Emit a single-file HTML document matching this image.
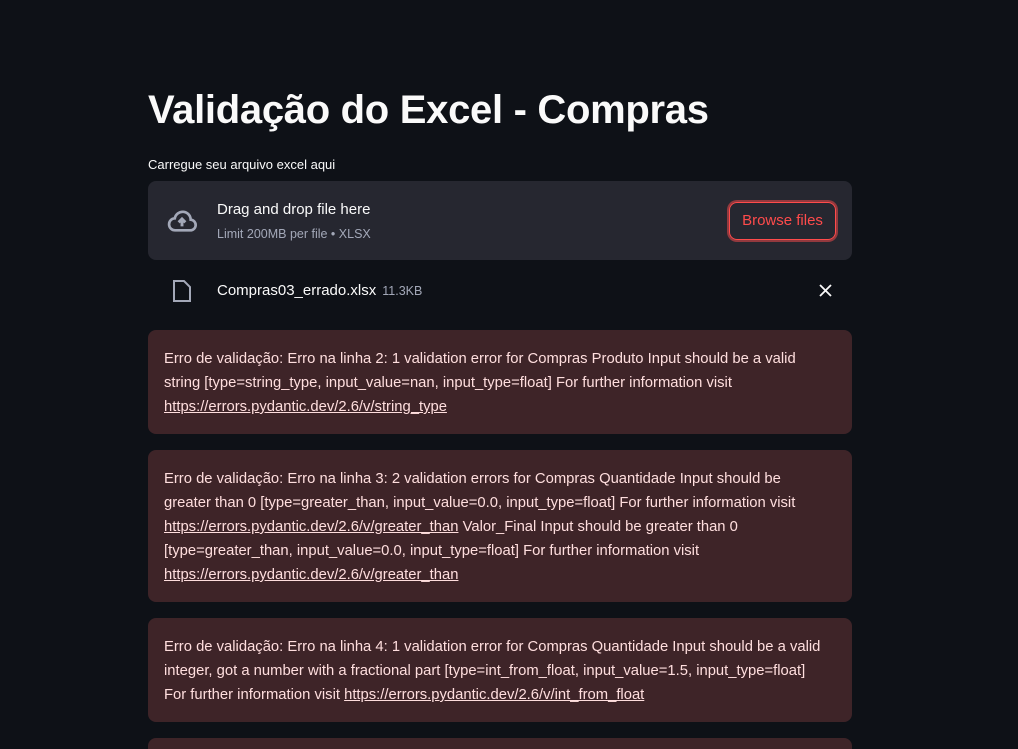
<!DOCTYPE html>
<html><head><meta charset="utf-8"><style>
html,body{margin:0;height:749px;overflow:hidden}
body{background:#0e1117;font-family:"Liberation Sans",sans-serif;color:#fafafa;width:1018px;position:relative}
h1{position:absolute;left:148px;top:84px;margin:0;font-size:40px;font-weight:700;letter-spacing:-0.3px;line-height:52px;white-space:nowrap}
.lbl{position:absolute;left:148px;top:157px;font-size:13px}
.drop{position:absolute;left:148px;top:181px;width:704px;height:79px;background:#262730;border-radius:8px}
.drop .t1{position:absolute;left:69px;top:20px;font-size:15px}
.drop .t2{position:absolute;left:69px;top:46px;font-size:12.5px;color:#a3a8b8}
.btn{position:absolute;left:581px;top:21px;width:107px;height:38px;border:1px solid #ff4b4b;box-shadow:0 0 0 2px rgba(255,75,75,.5);border-radius:8px;box-sizing:border-box;color:#ff4b4b;font-size:15px;text-align:center;line-height:36px}
.file{position:absolute;left:217px;top:282px;font-size:15px}
.file span{font-size:12.5px;color:#a3a8b8;margin-left:6px}
.err{position:absolute;left:148px;width:704px;background:#3e2428;border-radius:8px;box-sizing:border-box;padding:17px 16px;color:#ffdede;font-size:14.8px;line-height:24px;white-space:nowrap}
.err a{color:#ffdede;text-decoration:underline}
</style></head><body>
<h1>Validação do Excel - Compras</h1>
<div class="lbl">Carregue seu arquivo excel aqui</div>
<div class="drop">
<svg style="position:absolute;left:16px;top:24px" width="36" height="32" viewBox="0 0 24 24" fill="none" stroke="#a3a8b8" stroke-width="2"><path d="M7 19h11a4 4 0 0 0 .5-8A6 6 0 0 0 6.6 10 4.5 4.5 0 0 0 7 19z"/><path d="M12 16v-5M9.5 13l2.5-2.5 2.5 2.5" stroke-width="2.2"/></svg>
<div class="t1">Drag and drop file here</div>
<div class="t2">Limit 200MB per file • XLSX</div>
<div class="btn">Browse files</div>
</div>
<svg style="position:absolute;left:172px;top:279px" width="20" height="24" viewBox="0 0 20 24" fill="none" stroke="#a3a8b8" stroke-width="2"><path d="M2 2h10l6 6v14H2z"/></svg>
<div class="file">Compras03_errado.xlsx<span>11.3KB</span></div>
<svg style="position:absolute;left:819px;top:284px" width="13" height="13" viewBox="0 0 13 13" stroke="#fafafa" stroke-width="1.8"><path d="M1 1l11 11M12 1L1 12"/></svg>
<div class="err" style="top:330px;height:104px">Erro de validação: Erro na linha 2: 1 validation error for Compras Produto Input should be a valid<br>string [type=string_type, input_value=nan, input_type=float] For further information visit<br><a>https://errors.pydantic.dev/2.6/v/string_type</a></div>
<div class="err" style="top:450px;height:152px">Erro de validação: Erro na linha 3: 2 validation errors for Compras Quantidade Input should be<br>greater than 0 [type=greater_than, input_value=0.0, input_type=float] For further information visit<br><a>https://errors.pydantic.dev/2.6/v/greater_than</a> Valor_Final Input should be greater than 0<br>[type=greater_than, input_value=0.0, input_type=float] For further information visit<br><a>https://errors.pydantic.dev/2.6/v/greater_than</a></div>
<div class="err" style="top:618px;height:104px">Erro de validação: Erro na linha 4: 1 validation error for Compras Quantidade Input should be a valid<br>integer, got a number with a fractional part [type=int_from_float, input_value=1.5, input_type=float]<br>For further information visit <a>https://errors.pydantic.dev/2.6/v/int_from_float</a></div>
<div class="err" style="top:738px;height:11px;border-radius:8px 8px 0 0"></div>
</body></html>
